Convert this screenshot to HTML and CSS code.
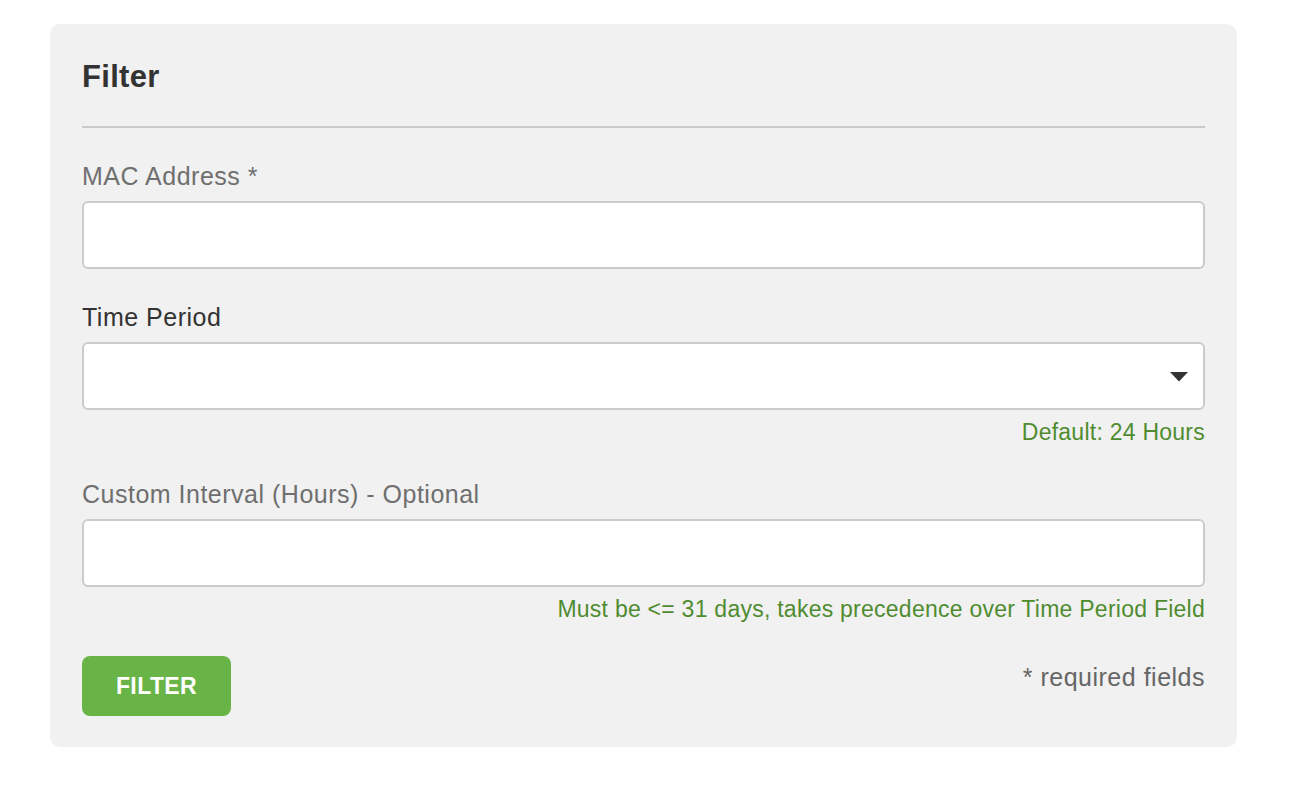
FILE: index.html
```html
<!DOCTYPE html>
<html lang="en">
<head>
<meta charset="utf-8">
<title>Filter</title>
<link rel="stylesheet" href="styles.css">
</head>
<body>
<form class="card">
  <h2 class="card-title">Filter</h2>
  <hr class="divider">
  <div class="group">
    <label class="label label-muted" for="mac">MAC Address *</label>
    <input class="field" id="mac" type="text">
  </div>
  <div class="group">
    <label class="label label-dark" for="period">Time Period</label>
    <div class="select-wrap">
      <select class="field select" id="period"><option></option></select>
      <svg class="caret" width="18" height="10" viewBox="0 0 18 10"><path d="M0 0H18L9 9.5Z" fill="#333"/></svg>
    </div>
    <p class="help">Default: 24 Hours</p>
  </div>
  <div class="group">
    <label class="label label-muted" for="interval">Custom Interval (Hours) - Optional</label>
    <input class="field" id="interval" type="text">
    <p class="help">Must be &lt;= 31 days, takes precedence over Time Period Field</p>
  </div>
  <div class="actions">
    <button class="btn" type="button">FILTER</button>
    <span class="required-note">* required fields</span>
  </div>
</form>
</body>
</html>
```

FILE: styles.css
```css
* { box-sizing: border-box; }

html, body {
  margin: 0;
  padding: 0;
  background: #ffffff;
  font-family: "Liberation Sans", Arial, Helvetica, sans-serif;
  color: #333333;
}

.card {
  margin: 24px 0 0 50px;
  width: 1187px;
  padding: 35px 32px 31px;
  background: #f1f1f1;
  border-radius: 10px;
}

.card-title {
  margin: 0;
  font-size: 31px;
  line-height: 36px;
  font-weight: bold;
  letter-spacing: 0.3px;
  color: #333333;
}

.divider {
  margin: 31px 0 0;
  border: 0;
  height: 2px;
  background: #cacaca;
}

.group {
  margin-top: 33px;
}

.label {
  display: block;
  font-size: 25px;
  line-height: 30px;
  letter-spacing: 0.5px;
  margin-bottom: 10px;
}

.label-muted { color: #6f6f6f; }
.label-dark { color: #333333; }

.field {
  display: block;
  width: 100%;
  height: 68px;
  margin: 0;
  padding: 0 16px;
  background: #ffffff;
  border: 2px solid #cbcbcb;
  border-radius: 6px;
  font-family: inherit;
  font-size: 22px;
  color: #333333;
  outline: none;
}

.select-wrap {
  position: relative;
}

.select {
  appearance: none;
  -webkit-appearance: none;
}

.caret {
  position: absolute;
  right: 17px;
  top: 30px;
  pointer-events: none;
}

.help {
  margin: 9px 0 0;
  text-align: right;
  font-size: 23px;
  line-height: 27px;
  letter-spacing: 0.25px;
  color: #4f8c30;
}

.actions {
  margin-top: 33px;
  display: flex;
  justify-content: space-between;
  align-items: flex-start;
}

.btn {
  width: 149px;
  height: 60px;
  padding: 0;
  border: 0;
  border-radius: 8px;
  background: #68b446;
  color: #ffffff;
  font-family: inherit;
  font-size: 23px;
  font-weight: bold;
  letter-spacing: 0.4px;
  cursor: pointer;
}

.required-note {
  margin-top: 6px;
  font-size: 25px;
  line-height: 30px;
  letter-spacing: 0.5px;
  color: #666666;
}
```
